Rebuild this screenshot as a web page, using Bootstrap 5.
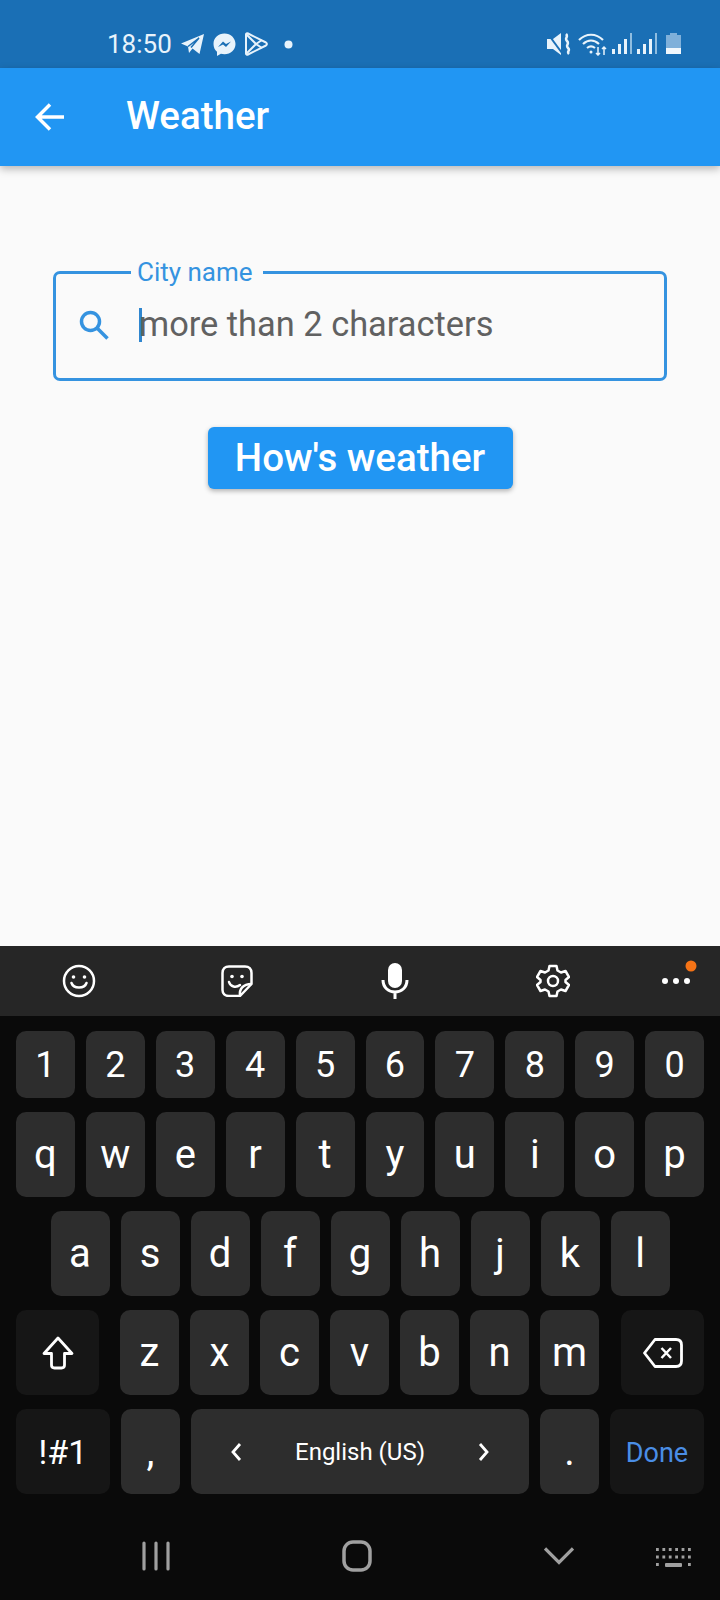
<!DOCTYPE html>
<html lang="en">
<head>
  <meta charset="UTF-8" />
  <meta name="viewport" content="width=device-width, initial-scale=1" />
  <title>Weather</title>
  <link rel="stylesheet" href="https://cdn.jsdelivr.net/npm/bootstrap@5.3.0/dist/css/bootstrap.min.css" />
  <style>
    body { font-family: Roboto, "Liberation Sans", sans-serif; background: #fafafa; height: 1600px; overflow: hidden; }
    .phone-status { height: 68px; background: #1a6fb5; color: #e8f3fb; padding: 20px 39px 0 107px; font-size: 26px; }
    .phone-status svg { display: block; }
    .st-time { margin-right: 8px; }
    .st-msg { margin-left: 8px; }
    .st-play { margin-left: 8px; }
    .st-dot { margin-left: 16px; }
    .st-wifi { margin-left: 7px; }
    .st-sig { margin-left: 5px; }
    .st-sig-2 { margin-left: 4px; }
    .st-batt { margin-left: 8px; }
    .app-bar { height: 98px; background: #2196f3; padding: 0 0 0 35px; box-shadow: 0 3px 8px rgba(0,0,0,.28); flex-wrap: nowrap; justify-content: flex-start; position: relative; }
    .app-title { color: #fff; font-size: 38.5px; font-weight: 500; margin: 0 0 2px 61px; line-height: 1; }
    .page-main { padding: 105px 53px 0; }
    .city-field { position: relative; height: 110px; border: 3px solid #3593e0; border-radius: 7px; padding: 0 0 3px 23px; }
    .city-label { position: absolute; top: -17px; left: 75px; padding: 0 10px 0 6px; background: #fafafa; color: #3593e0; font-size: 26px; line-height: 30px; }
    .city-caret { width: 3px; height: 34px; background: #2f86cf; margin-left: 30px; margin-right: -3px; flex: none; }
    .city-hint-text { color: #616161; font-size: 34.4px; line-height: 1; }
    .weather-btn { background: #2196f3; border: 0; border-radius: 6px; color: #fff; font-size: 38.5px; font-weight: 500; width: 305px; height: 62px; line-height: 1; padding: 0; margin-top: 46px; box-shadow: 0 2px 5px rgba(0,0,0,.3); }
    .weather-btn:hover { background: #2196f3; color: #fff; }
    .kb-wrap { height: 654px; background: #0a0a0a; flex: none; }
    .kb-tools { height: 70px; background: #262626; }
    .kb-tool { width: 158px; }
    .kb-tool-last { width: 88px; position: relative; }
    .kb-badge { left: 53px; top: -17px; }
    .kb-rows { padding: 15px 16px 0; gap: 14px; }
    .kb-row { gap: 11px; }
    .kb-key { background: #2d2d2d; color: #fff; border: 0; border-radius: 10px; padding: 0; width: 59px; flex: none; font-size: 40px; line-height: 1; }
    .kb-key-fill { flex: 1 1 0; width: auto; }
    .h-num { height: 67px; font-size: 36px; }
    .h-let { height: 85px; }
    .kb-dark { background: #161616; }
    .kb-shift { width: 83px; margin-right: 10px; }
    .kb-back { width: 83px; margin-left: 11px; }
    .kb-sym { width: 94px; font-size: 34px; }
    .kb-done { width: 94px; font-size: 27px; color: #4a8ee6; padding-top: 3px; }
    .kb-space { font-size: 24px; padding: 1px 39px 0; }
    .kb-nav { padding-left: 142px; margin-top: 46px; }
    .nav-home { margin-left: 172px; }
    .nav-down { margin-left: 172px; }
    .nav-kbd { margin-left: 82px; margin-top: 3px; }
  </style>
</head>
<body class="d-flex flex-column">
  <!-- Status bar -->
  <div class="phone-status d-flex align-items-center">
    <span class="st-time">18:50</span>
    <svg width="25" height="22" viewBox="0 0 25 22"><path d="M24 1 19.5 21 12.5 15.5 9 20 8 13.5 1 10.5Z" fill="#e8f3fb"/><path d="M8 13.5 19 5 11 14.5" fill="none" stroke="#1a6fb5" stroke-width="1.5"/></svg>
    <svg class="st-msg" width="23" height="23" viewBox="0 0 23 23"><path d="M11.5 0.5C5.2 0.5.5 5 .5 11c0 3.2 1.3 5.9 3.5 7.8V23l3.9-2.2c1.100.3 2.300.5 3.600.5 6.300 0 11-4.500 11-10.300S17.800.5 11.500.5Z" fill="#e8f3fb"/><path d="M5 14 10 8.5 13 11 18 8.5 13 14 10 11.5Z" fill="#1a6fb5"/></svg>
    <svg class="st-play" width="24" height="24" viewBox="0 0 24 24" fill="none" stroke="#e8f3fb" stroke-width="2" stroke-linejoin="round"><path d="M2 2.5C2 1.5 3 1 4 1.5L22 10.5C23.2 11.2 23.2 12.8 22 13.5L4 22.5C3 23 2 22.500 2 21.500Z"/><path d="M2 2 12 12 2 22M12 12 18 8M12 12 18 16"/></svg>
    <svg class="st-dot me-auto" width="9" height="9" viewBox="0 0 9 9"><circle cx="4.5" cy="4.5" r="4" fill="#e8f3fb"/></svg>
    <svg width="24" height="22" viewBox="0 0 24 22"><path d="M0 6H6L14 0V22L6 16H0Z" fill="#e8f3fb"/><path d="M1 1 15 20" stroke="#1a6fb5" stroke-width="2"/><path d="M19 1c3 3-2 4 1 7s-2 4 1 7-2 3 1 6" fill="none" stroke="#e8f3fb" stroke-width="2.5"/></svg>
    <svg class="st-wifi" width="29" height="23" viewBox="0 0 29 23" fill="none" stroke="#e8f3fb" stroke-width="2.2"><path d="M1 7c7-7 17-7 24 0M5 11c5-4.5 11-4.5 16 0M9 15c2.5-2 5.5-2 8 0"/><circle cx="13" cy="19" r="1.5" fill="#e8f3fb" stroke="none"/><path d="M20 14v8M18 20l2 2 2-2M26 22v-8M24 16l2-2 2 2" stroke-width="1.5"/></svg>
    <svg class="st-sig" width="21" height="22" viewBox="0 0 21 22"><g fill="#e8f3fb"><rect x="0" y="16" width="3" height="5"/><rect x="6" y="11" width="3" height="10"/><rect x="12" y="6" width="3" height="15"/></g><rect x="18" y="0" width="2" height="21" fill="#8fbde0"/></svg>
    <svg class="st-sig-2" width="21" height="22" viewBox="0 0 21 22"><g fill="#e8f3fb"><rect x="0" y="16" width="3" height="5"/><rect x="6" y="11" width="3" height="10"/><rect x="12" y="6" width="3" height="15"/></g><rect x="18" y="0" width="2" height="21" fill="#8fbde0"/></svg>
    <svg class="st-batt" width="15" height="22" viewBox="0 0 15 22"><path d="M4 0H11V2H15V21H0V2H4Z" fill="#7fb0da"/><rect x="0" y="15" width="15" height="6" fill="#f1f7fc"/></svg>
  </div>

  <!-- App bar -->
  <nav class="navbar app-bar">
    <svg width="30" height="28" viewBox="0 0 30 28" fill="none" stroke="#fff" stroke-width="3.5"><path d="M29 14H3M15 1.5 2.5 14 15 26.5"/></svg>
    <span class="app-title">Weather</span>
  </nav>

  <main class="page-main flex-grow-1 d-flex flex-column align-items-center">
    <div class="city-field d-flex align-items-center w-100">
      <span class="city-label">City name</span>
      <svg width="30" height="30" viewBox="0 0 30 30" fill="none" stroke="#3593e0" stroke-width="3.5"><circle cx="11.5" cy="11.5" r="9"/><path d="M18 18 28.5 28.5"/></svg>
      <span class="city-caret"></span>
      <span class="city-hint-text">more than 2 characters</span>
    </div>
    <button type="button" class="btn weather-btn">How's weather</button>
  </main>

  <!-- Keyboard -->
  <div class="kb-wrap d-flex flex-column">
    <div class="kb-tools d-flex align-items-center">
      <div class="kb-tool d-flex justify-content-center">
        <svg width="34" height="34" viewBox="0 0 34 34" fill="none" stroke="#fff" stroke-width="2.5"><circle cx="17" cy="17" r="15"/><path d="M9.5 19c2 6 13 6 15 0" stroke-linecap="round"/><circle cx="11.5" cy="13" r="1.8" fill="#fff" stroke="none"/><circle cx="22.5" cy="13" r="1.8" fill="#fff" stroke="none"/></svg>
      </div>
      <div class="kb-tool d-flex justify-content-center">
        <svg width="32" height="32" viewBox="0 0 32 32" fill="none" stroke="#fff" stroke-width="2.5" stroke-linejoin="round"><path d="M19 31H8C4 31 1.5 28.5 1.5 25V8C1.5 4 4 1.5 8 1.5H24C28 1.5 30.5 4 30.5 8V19Z"/><path d="M19 31C18 24 22 19 30.5 19"/><path d="M8 17c1.5 5 7 6 11 3" stroke-linecap="round"/><circle cx="11" cy="11.5" r="1.8" fill="#fff" stroke="none"/><circle cx="21" cy="11.5" r="1.8" fill="#fff" stroke="none"/></svg>
      </div>
      <div class="kb-tool d-flex justify-content-center">
        <svg width="28" height="36" viewBox="0 0 28 36" fill="none" stroke="#fff" stroke-width="3"><rect x="7" y="0" width="14" height="25" rx="7" fill="#fff" stroke="none"/><path d="M2 17c0 16 24 16 24 0M14 28v8"/></svg>
      </div>
      <div class="kb-tool d-flex justify-content-center">
        <svg width="34" height="34" viewBox="0 0 34 34" fill="none" stroke="#fff" stroke-width="2.5" stroke-linejoin="round"><path d="M13.5 2H20.5L21.5 6.5 25 8.5 29.5 7 33 13 29.5 16 29.5 18 33 21 29.5 27 25 25.5 21.5 27.5 20.5 32H13.5L12.5 27.5 9 25.5 4.5 27 1 21 4.5 18V16L1 13 4.5 7 9 8.5 12.5 6.5Z"/><circle cx="17" cy="17" r="5"/></svg>
      </div>
      <div class="kb-tool-last d-flex justify-content-center">
        <svg width="30" height="8" viewBox="0 0 30 8"><circle cx="4" cy="4" r="3" fill="#fff"/><circle cx="15" cy="4" r="3" fill="#fff"/><circle cx="26" cy="4" r="3" fill="#fff"/></svg>
        <svg class="kb-badge position-absolute" width="12" height="12" viewBox="0 0 12 12"><circle cx="6" cy="6" r="5.5" fill="#f57316"/></svg>
      </div>
    </div>

    <div class="kb-rows d-flex flex-column" id="kbRows"></div>

    <div class="kb-nav d-flex align-items-center">
      <svg width="28" height="30" viewBox="0 0 28 30" stroke="#a0a0a0" stroke-width="3.2" stroke-linecap="round"><path d="M2 2V28M14 2V28M26 2V28"/></svg>
      <svg class="nav-home" width="30" height="32" viewBox="0 0 30 32" fill="none" stroke="#a0a0a0" stroke-width="3.5"><rect x="2" y="2" width="26" height="28" rx="9"/></svg>
      <svg class="nav-down" width="30" height="18" viewBox="0 0 30 18" fill="none" stroke="#a0a0a0" stroke-width="3.2"><path d="M1 1.5 15 15.5 29 1.5"/></svg>
      <svg class="nav-kbd" width="35" height="20" viewBox="0 0 35 20" fill="#a0a0a0" id="navKbd"></svg>
    </div>
  </div>

  <script src="https://cdn.jsdelivr.net/npm/bootstrap@5.3.0/dist/js/bootstrap.bundle.min.js"></script>
  <script>
    const shiftIcon = '<svg width="32" height="34" viewBox="0 0 32 34" fill="none" stroke="#fff" stroke-width="2.8" stroke-linejoin="round"><path d="M16 2 30 17.5H22.5V29C22.5 31 21 32 19.5 32H12.5C11 32 9.5 31 9.5 29V17.5H2Z"/></svg>';
    const backIcon = '<svg width="40" height="30" viewBox="0 0 40 30" fill="none" stroke="#fff" stroke-width="2.8" stroke-linejoin="round"><path d="M12 1.5H33C36.5 1.5 38.5 3.5 38.5 7V23C38.5 26.5 36.5 28.5 33 28.5H12L1.5 15Z"/><path d="M18.5 10 28 20M28 10 18.5 20" stroke-width="2.5"/></svg>';
    const leftIcon = '<svg width="12" height="20" viewBox="0 0 12 20" fill="none" stroke="#fff" stroke-width="2.8"><path d="M10 2 3 10 10 18"/></svg>';
    const rightIcon = '<svg width="12" height="20" viewBox="0 0 12 20" fill="none" stroke="#fff" stroke-width="2.8"><path d="M2 2 9 10 2 18"/></svg>';

    function key(label, extra) {
      return `<button type="button" class="kb-key d-flex align-items-center justify-content-center ${extra}">${label}</button>`;
    }

    const rows = [
      [..."1234567890"].map(c => key(c, "kb-key-fill h-num")).join(""),
      [..."qwertyuiop"].map(c => key(c, "kb-key-fill h-let")).join(""),
      [..."asdfghjkl"].map(c => key(c, "h-let")).join(""),
      key(shiftIcon, "h-let kb-dark kb-shift") + [..."zxcvbnm"].map(c => key(c, "h-let")).join("") + key(backIcon, "h-let kb-dark kb-back"),
      key("!#1", "h-let kb-dark kb-sym") + key(",", "h-let") +
        `<button type="button" class="kb-key kb-key-fill kb-space h-let d-flex align-items-center justify-content-between">${leftIcon}<span>English (US)</span>${rightIcon}</button>` +
        key(".", "h-let") + key("Done", "h-let kb-dark kb-done"),
    ];
    document.getElementById("kbRows").innerHTML = rows
      .map(r => `<div class="kb-row d-flex justify-content-center">${r}</div>`)
      .join("");

    // little dot grid of the keyboard-hide button
    let dots = "";
    for (let y = 0; y < 3; y++) {
      for (let x = 0; x < 6; x++) {
        if (y === 2 && x > 0 && x < 5) continue;
        dots += `<rect x="${x * 6.4}" y="${y * 7.5}" width="2.8" height="3"/>`;
      }
    }
    document.getElementById("navKbd").innerHTML = dots + '<rect x="9" y="15" width="17" height="4" rx="1"/>';
  </script>
</body>
</html>
